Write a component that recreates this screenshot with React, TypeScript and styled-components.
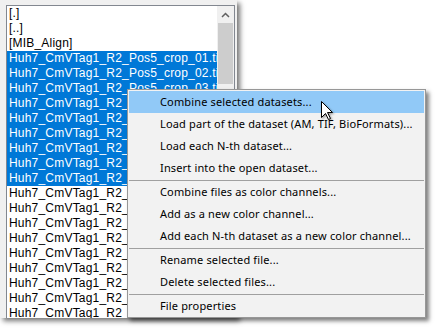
import React from "react";
import styled, { createGlobalStyle } from "styled-components";

const GlobalStyle = createGlobalStyle`
  html, body { margin: 0; padding: 0; background: #ffffff; }
  #root { width: 437px; height: 330px; position: relative; overflow: hidden; }
`;

const Capture = styled.div`
  position: relative;
  width: 231px;
  height: 313px;
  padding: 5px 0 0 6px;
  background: #f0f0f0;
  box-shadow: 3px 3px 5px rgba(0, 0, 0, 0.55);
  overflow: hidden;
`;

const ListBox = styled.div`
  display: flex;
  width: 227px;
  height: 330px;
  border: 1px solid #828790;
  background: #ffffff;
`;

const Rows = styled.div`
  display: flex;
  flex-direction: column;
  width: 210px;
  overflow: hidden;
`;

const Row = styled.div<{ $selected?: boolean }>`
  height: 15px;
  line-height: 15px;
  padding-left: 2px;
  font-family: "Liberation Sans", Arial, sans-serif;
  font-size: 12px;
  letter-spacing: 0.2px;
  white-space: nowrap;
  overflow: hidden;
  color: ${(p) => (p.$selected ? "#ffffff" : "#000000")};
  background: ${(p) => (p.$selected ? "#0078d7" : "transparent")};
`;

const ScrollBar = styled.div`
  display: flex;
  flex-direction: column;
  width: 17px;
  background: #f0f0f0;
`;

const ScrollButton = styled.div`
  height: 17px;
  display: flex;
  align-items: center;
  justify-content: center;
`;

const Thumb = styled.div`
  margin: 0 1px;
  height: 61px;
  background: #cdcdcd;
`;

const Menu = styled.div`
  position: absolute;
  left: 127px;
  top: 89px;
  width: 295px;
  padding: 1px 1px 0;
  border: 1px solid #979797;
  background: #f2f2f2;
  box-shadow: 3px 3px 4px rgba(0, 0, 0, 0.5);
  display: flex;
  flex-direction: column;
`;

const MenuItem = styled.div<{ $active?: boolean }>`
  height: 22px;
  line-height: 22px;
  padding-left: 31px;
  font-family: "Noto Sans", "Segoe UI", sans-serif;
  font-size: 11px;
  letter-spacing: 0.15px;
  color: #000000;
  white-space: nowrap;
  background: ${(p) => (p.$active ? "#91c9f7" : "transparent")};
`;

const Separator = styled.div`
  height: 1px;
  margin-top: 1px;
  background: #a0a0a0;
`;

const Cursor = styled.svg`
  position: absolute;
  left: 321px;
  top: 101px;
  filter: drop-shadow(1px 1px 1px rgba(0, 0, 0, 0.4));
`;

const rows: { text: string; selected?: boolean }[] = [
  { text: "[.]" },
  { text: "[..]" },
  { text: "[MIB_Align]" },
];
for (let i = 1; i <= 18; i++) {
  const n = i < 10 ? `0${i}` : `${i}`;
  rows.push({ text: `Huh7_CmVTag1_R2_Pos5_crop_${n}.tif`, selected: i <= 9 });
}

type Entry = { label: string; active?: boolean } | "sep";
const menu: Entry[] = [
  { label: "Combine selected datasets...", active: true },
  { label: "Load part of the dataset (AM, TIF, BioFormats)..." },
  { label: "Load each N-th dataset..." },
  { label: "Insert into the open dataset..." },
  "sep",
  { label: "Combine files as color channels..." },
  { label: "Add as a new color channel..." },
  { label: "Add each N-th dataset as a new color channel..." },
  "sep",
  { label: "Rename selected file..." },
  { label: "Delete selected files..." },
  "sep",
  { label: "File properties" },
];

export default function App() {
  return (
    <>
      <GlobalStyle />
      <Capture>
        <ListBox>
          <Rows>
            {rows.map((r, i) => (
              <Row key={i} $selected={r.selected}>
                {r.text}
              </Row>
            ))}
          </Rows>
          <ScrollBar>
            <ScrollButton>
              <svg width="9" height="6" viewBox="0 0 9 6">
                <path d="M1 5 L4.5 1.5 L8 5" fill="none" stroke="#606060" strokeWidth="1.5" />
              </svg>
            </ScrollButton>
            <Thumb />
          </ScrollBar>
        </ListBox>
      </Capture>
      <Menu>
        {menu.map((m, i) =>
          m === "sep" ? (
            <Separator key={i} />
          ) : (
            <MenuItem key={i} $active={m.active}>
              {m.label}
            </MenuItem>
          )
        )}
      </Menu>
      <Cursor width="13" height="20" viewBox="0 0 13 20">
        <path
          d="M0.5 0.5 L0.5 16.5 L4.5 12.5 L7.5 18.5 L9.5 17.5 L6.5 11.5 L11.5 11.5 Z"
          fill="#ffffff"
          stroke="#000000"
          strokeWidth="1"
        />
      </Cursor>
    </>
  );
}
